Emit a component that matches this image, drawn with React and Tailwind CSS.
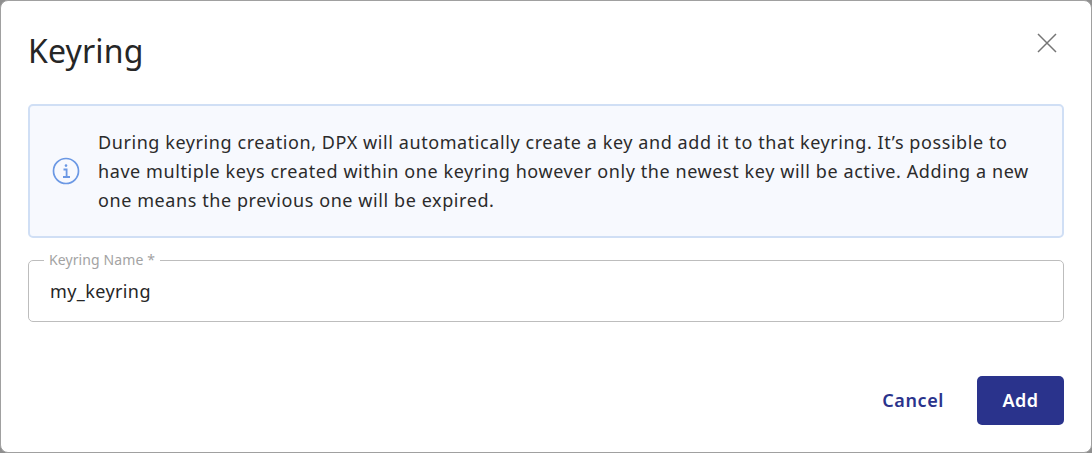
const App = () => {
  return (
    <div className="w-[1092px] h-[453px] bg-[#8f8f8f] font-['Noto_Sans',sans-serif]">
      <div className="w-full h-full bg-white rounded-lg border-t-[1.5px] border-l-[1.5px] border-r border-b border-[#a0a0a0] flex flex-col px-[27px] overflow-hidden">
        <div className="flex justify-between items-start h-[103px] pt-[27px]">
          <h1 className="text-[32px] leading-[48px] text-[#262626] -mt-[1px] tracking-[0.15px]">Keyring</h1>
          <button className="mt-[5px] mr-[7px] text-[#757575]">
            <svg width="20" height="20" viewBox="0 0 20 20" fill="none" stroke="currentColor" strokeWidth="1.5">
              <path d="M1 1 L19 19 M19 1 L1 19" />
            </svg>
          </button>
        </div>

        <div className="h-[134px] flex items-center rounded-[5px] border-2 border-[#d0dff5] bg-[#f7f9fe] pl-[22px] pr-[20px]">
          <svg className="shrink-0" width="28" height="28" viewBox="0 0 28 28" fill="none" stroke="#6b98e4">
            <circle cx="14" cy="14" r="12.5" strokeWidth="1.7" />
            <circle cx="14" cy="8.6" r="1.3" fill="#6b98e4" stroke="none" />
            <path d="M11.5 12.5 H14.6 V19.5 M11 20 H18" strokeWidth="1.8" />
          </svg>
          <p className="ml-[18px] text-[18px] leading-[29px] tracking-[0.58px] text-[#2b2b2b] whitespace-nowrap">
            During keyring creation, DPX will automatically create a key and add it to that keyring. It’s possible to<br />
            have multiple keys created within one keyring however only the newest key will be active. Adding a new<br />
            one means the previous one will be expired.
          </p>
        </div>

        <fieldset className="mt-[15px] h-[69px] rounded-[5px] border border-[#bdbdbd] pl-[15px] pr-[20px]">
          <legend className="px-[5px] text-[14px] leading-[14px] tracking-[0.1px] text-[#a3a3a3]">Keyring Name *</legend>
          <div className="text-[18px] leading-[28px] tracking-[0.4px] text-[#262626] pl-[6px] pt-[10px]">my_keyring</div>
        </fieldset>

        <div className="flex justify-end items-center gap-[33px] mt-[54px]">
          <button className="text-[18px] font-semibold tracking-[0.6px] text-[#2a338c]">Cancel</button>
          <button className="w-[87px] h-[49px] rounded-[5px] bg-[#2a338c] text-white text-[18px] font-semibold tracking-[0.5px]">Add</button>
        </div>
      </div>
    </div>
  );
};

export default App;
